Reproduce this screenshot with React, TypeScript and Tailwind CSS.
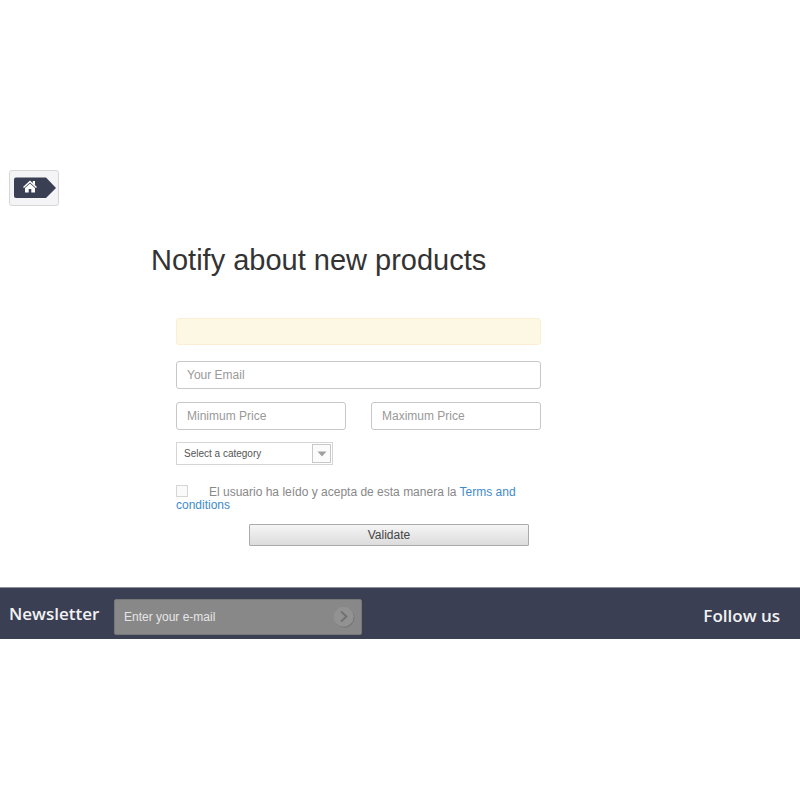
const inputStyle =
  'h-7 w-full rounded-[3px] border border-[#c8c8c8] bg-white px-2.5 text-xs text-[#555] placeholder:text-[#999] outline-none';

const Breadcrumb = () => {
  return (
    <nav className="flex px-[9px]" aria-label="Breadcrumb">
      <div className="flex h-9 w-[50px] items-center rounded-[3px] border border-[#d6d4d4] bg-[#f4f4f6] px-1">
        <a href="#home" aria-label="Home">
          <svg width="42" height="22" viewBox="0 0 42 22" className="block">
            <path d="M2 0.500H32L42 11L32 21H2Q0 21 0 19V2.500Q0 0.500 2 0.500Z" fill="#3a3f54" />
            <path d="M16 3.500L23 9.900L22 11L16 5.600L10 11L9 9.900Z" fill="#fff" />
            <path d="M18.800 4H21V8.200L18.800 6.200Z" fill="#fff" />
            <path d="M16 6.500L21 11V15.500H17.300V12H14.700V15.500H11V11Z" fill="#fff" />
          </svg>
        </a>
      </div>
    </nav>
  );
};

const CategorySelect = () => {
  return (
    <div className="relative w-[157px]">
      <select
        aria-label="Category"
        defaultValue=""
        className="block h-[23px] w-full appearance-none rounded-none border border-[#d6d4d4] bg-white pr-6 pl-[7px] text-[10px] text-[#555] outline-none"
      >
        <option value="">Select a category</option>
      </select>
      <span className="pointer-events-none absolute top-0.5 right-0.5 flex h-[19px] w-[19px] items-center justify-center border border-[#c8c8c8] bg-[#fbfbfb]">
        <svg width="10" height="6" viewBox="0 0 10 6">
          <path d="M0.500 0.500H9.500L5 5.500Z" fill="#a0a0a0" />
        </svg>
      </span>
    </div>
  );
};

const NotifyForm = () => {
  return (
    <form className="ml-[176px] w-[365px] max-w-full" onSubmit={event => event.preventDefault()}>
      <div role="status" className="h-[27px] rounded-[3px] border border-[#fbeed5] bg-[#fcf8e3]" />
      <input type="email" aria-label="Your Email" placeholder="Your Email" className={`mt-4 ${inputStyle}`} />
      <div className="mt-[13px] flex gap-[25px]">
        <input type="text" aria-label="Minimum Price" placeholder="Minimum Price" className={inputStyle} />
        <input type="text" aria-label="Maximum Price" placeholder="Maximum Price" className={inputStyle} />
      </div>
      <div className="mt-3">
        <CategorySelect />
      </div>
      <div className="mt-5 text-xs leading-[13px] text-[#888]">
        <input
          id="terms"
          type="checkbox"
          className="mr-[21px] h-3 w-3 appearance-none border border-[#d6d4d4] bg-[#fafafa] align-text-top checked:bg-[#888]"
        />
        <label htmlFor="terms">El usuario ha leído y acepta de esta manera la </label>
        <a href="#terms" className="text-[#428bca]">
          Terms and conditions
        </a>
      </div>
      <button
        type="submit"
        className="mt-3 mr-3 ml-auto block h-[22px] w-[280px] rounded-[1px] border border-[#aaa] bg-linear-to-b from-[#f5f5f5] to-[#dcdcdc] text-xs text-[#444]"
      >
        Validate
      </button>
    </form>
  );
};

const Footer = () => {
  return (
    <footer className="mt-[41px] flex h-[52px] items-center justify-between border-t border-[#8f919c] bg-[#3a3f54] pr-5 pl-[9px]">
      <form className="flex items-center" onSubmit={event => event.preventDefault()}>
        <label htmlFor="newsletter" className="w-[105px] font-['Open_Sans',sans-serif] text-[17px] font-semibold text-[#f2f2f2]">
          Newsletter
        </label>
        <div className="mt-1.5 flex h-9 w-[248px] items-center rounded-[2px] border border-[#777] bg-[#888] pr-1.5 pl-[9px]">
          <input
            id="newsletter"
            type="email"
            placeholder="Enter your e-mail"
            className="min-w-0 flex-1 bg-transparent text-xs text-white outline-none placeholder:text-[#e6e6e6]"
          />
          <button type="submit" aria-label="Subscribe">
            <svg width="22" height="22" viewBox="0 0 22 22" className="block">
              <circle cx="11.500" cy="11.500" r="10" fill="#747474" />
              <circle cx="10.700" cy="10.700" r="10" fill="#929292" />
              <path d="M8 5.500L13.500 10.500L8 15.500" fill="none" stroke="#707070" strokeWidth="1.800" />
            </svg>
          </button>
        </div>
      </form>
      <h2 className="mt-1 font-['Open_Sans',sans-serif] text-[17px] font-semibold text-[#f2f2f2]">Follow us</h2>
    </footer>
  );
};

const App = () => {
  return (
    <div className="min-h-screen bg-white pt-[170px] font-['Liberation_Sans',Arial,sans-serif]">
      <Breadcrumb />
      <main>
        <h1 className="mt-9 mb-10 ml-[151px] text-[29px] leading-9 text-[#333]">Notify about new products</h1>
        <NotifyForm />
      </main>
      <Footer />
    </div>
  );
};

export default App;
